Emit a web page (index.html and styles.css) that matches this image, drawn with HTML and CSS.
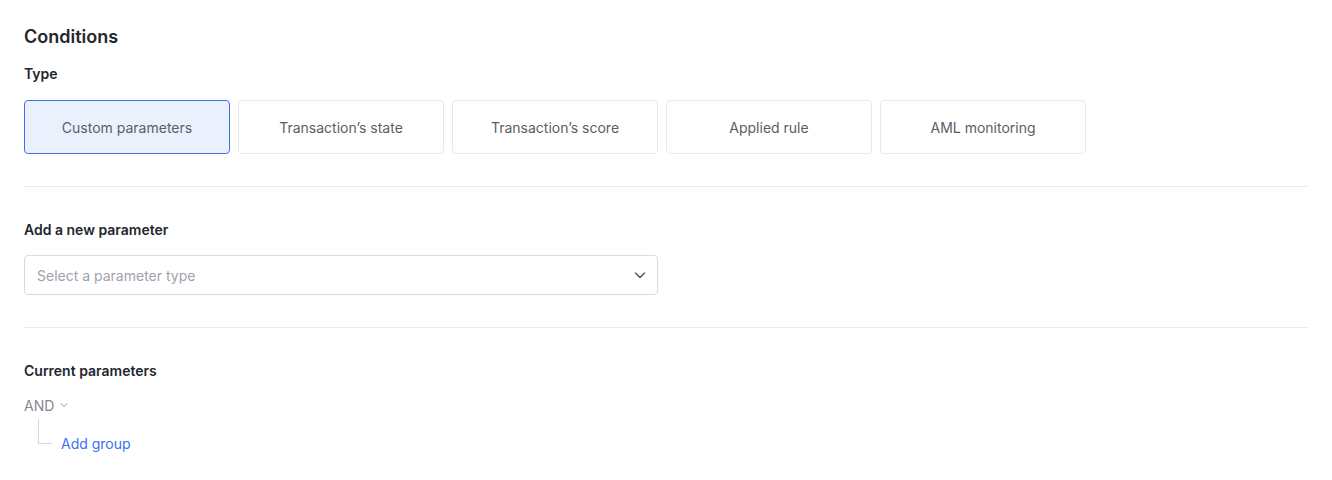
FILE: index.html
```html
<!DOCTYPE html>
<html lang="en">
<head>
    <meta charset="UTF-8">
    <title>Conditions</title>
    <link rel="stylesheet" href="styles.css">
</head>
<body>
    <div class="conditions">
        <h2 class="title">Conditions</h2>

        <div class="label">Type</div>
        <div class="types">
            <button class="type-btn active">Custom parameters</button>
            <button class="type-btn">Transaction’s state</button>
            <button class="type-btn">Transaction’s score</button>
            <button class="type-btn">Applied rule</button>
            <button class="type-btn">AML monitoring</button>
        </div>

        <hr class="divider">

        <div class="label">Add a new parameter</div>
        <div class="select">
            <span class="placeholder">Select a parameter type</span>
            <svg width="14" height="14" viewBox="0 0 14 14" fill="none">
                <path d="M2.5 5l4.5 4.5L11.5 5" stroke="#4b5563" stroke-width="1.4" stroke-linecap="round" stroke-linejoin="round"/>
            </svg>
        </div>

        <hr class="divider">

        <div class="label">Current parameters</div>
        <div class="operator">
            AND
            <svg width="10" height="10" viewBox="0 0 10 10" fill="none">
                <path d="M2 3.5l3 3 3-3" stroke="#c4c7cc" stroke-width="1.1" stroke-linecap="round" stroke-linejoin="round"/>
            </svg>
        </div>
        <div class="tree">
            <span class="branch"></span>
            <a class="add-group" href="#">Add group</a>
        </div>
    </div>
</body>
</html>
```

FILE: styles.css
```css
body {
    margin: 0;
    font-family: Inter, "Noto Sans", sans-serif;
    background: #fff;
    color: #23262b;
}

.conditions {
    padding: 26px 24px 20px 24px;
}

.title {
    font-size: 18px;
    font-weight: 600;
    line-height: 22px;
    margin: 0 0 17px 0;
}

.label {
    font-size: 14px;
    font-weight: 600;
    line-height: 18px;
    margin-bottom: 17px;
}

.types {
    display: flex;
    gap: 8px;
}

.type-btn {
    width: 206px;
    height: 54px;
    background: #fff;
    border: 1px solid #e8e9ec;
    border-radius: 4px;
    font-family: inherit;
    font-size: 14px;
    color: #5a5e66;
    cursor: pointer;
}

.type-btn.active {
    background: #ebf0fd;
    border-color: #3f72ef;
}

.divider {
    border: none;
    border-top: 1px solid #e9eaed;
    margin: 32px 0 34px 0;
}

.select {
    height: 38px;
    width: 610px;
    margin-top: -1px;
    border: 1px solid #d9dbe0;
    border-radius: 4px;
    display: flex;
    align-items: center;
    justify-content: space-between;
    padding: 0 10px 0 12px;
}

.placeholder {
    font-size: 14px;
    color: #9ea3ad;
}

.operator {
    display: flex;
    align-items: center;
    gap: 5px;
    font-size: 14px;
    color: #858991;
    margin-top: -1px;
    height: 18px;
}

.tree {
    display: flex;
    align-items: flex-end;
    margin-top: 5px;
    padding-left: 14px;
}

.branch {
    width: 13px;
    height: 24px;
    border-left: 1px solid #d6d8dc;
    border-bottom: 1px solid #d6d8dc;
    margin-right: 9px;
}

.add-group {
    font-size: 14px;
    color: #3a6ff2;
    text-decoration: none;
    line-height: 18px;
    margin-bottom: -9px;
}
```
